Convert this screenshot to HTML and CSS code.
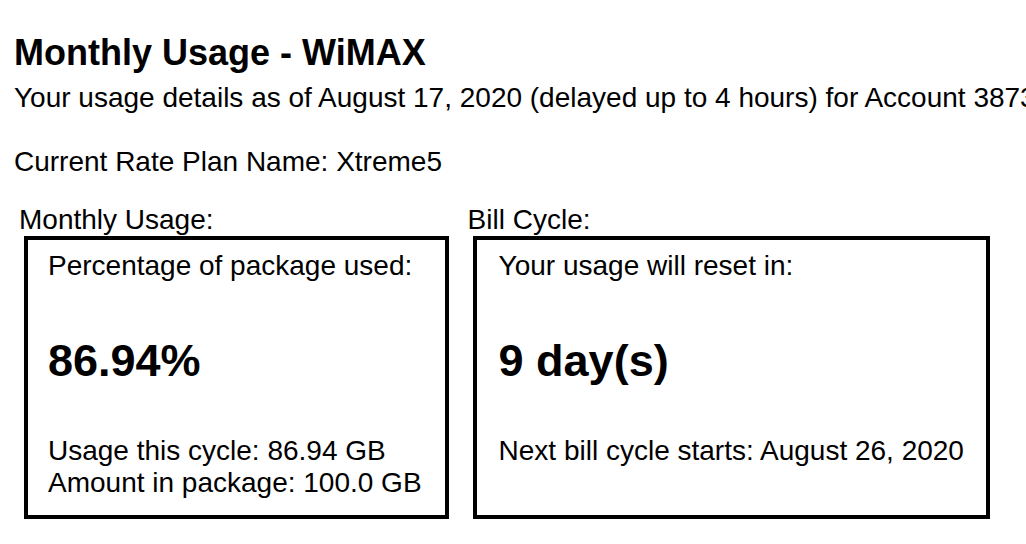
FILE: index.html
```html
<!DOCTYPE html>
<html lang="en">
<head>
<meta charset="utf-8">
<title>Monthly Usage - WiMAX</title>
<link rel="stylesheet" href="styles.css">
</head>
<body>
<main class="page">
  <h1 class="title">Monthly Usage - WiMAX</h1>
  <p class="asof">Your usage details as of August 17, 2020 (delayed up to 4 hours) for Account 38731942</p>
  <p class="plan">Current Rate Plan Name: Xtreme5</p>
  <div class="panels">
    <section class="panel">
      <div class="label">Monthly Usage:</div>
      <div class="box box-usage">
        <div class="line">Percentage of package used:</div>
        <div class="big">86.94%</div>
        <div class="line">Usage this cycle: 86.94 GB</div>
        <div class="line">Amount in package: 100.0 GB</div>
      </div>
    </section>
    <section class="panel">
      <div class="label">Bill Cycle:</div>
      <div class="box box-cycle">
        <div class="line">Your usage will reset in:</div>
        <div class="big">9 day(s)</div>
        <div class="line">Next bill cycle starts: August 26, 2020</div>
      </div>
    </section>
  </div>
</main>
</body>
</html>
```

FILE: styles.css
```css
html, body {
  margin: 0;
  padding: 0;
  background: #ffffff;
}

body {
  font-family: "Liberation Sans", Arial, Helvetica, sans-serif;
  font-size: 28px;
  line-height: normal;
  color: #000000;
  overflow: hidden;
}

.page {
  padding: 32px 0 0 14px;
  white-space: nowrap;
}

.title {
  font-size: 36px;
  font-weight: bold;
  margin: 0 0 8px 0;
}

.asof {
  margin: 0;
}

.plan {
  margin: 32px 0 0 0;
}

.panels {
  display: flex;
  align-items: stretch;
  gap: 19px;
  margin-top: 26px;
  padding-left: 5px;
}

.panel {
  display: flex;
  flex-direction: column;
}

.label {
  line-height: 32px;
}

.box {
  flex: 1;
  margin-left: 5px;
  border: 4px solid #000000;
  padding: 10px 22px 16px 20px;
}

.box-usage {
  padding-right: 23px;
}

.box-cycle {
  padding-left: 22px;
}

.line {
  line-height: 32px;
}

.big {
  font-size: 45px;
  font-weight: bold;
  margin: 53px 0 48px 0;
}
```
